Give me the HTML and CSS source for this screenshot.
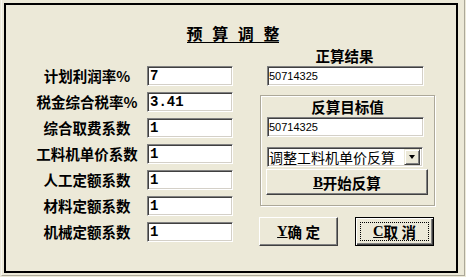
FILE: index.html
```html
<!DOCTYPE html>
<html lang="zh">

<head>
    <meta charset="UTF-8">
    <title>预算调整</title>
    <link rel="stylesheet" href="styles.css">
</head>

<body>
    <div class="win">
        <div class="panel">
            <div class="title"><span>预 算 调 整</span></div>
            <div class="body">
                <!-- 左侧系数 -->
                <div class="fields">
                    <div class="row"><label>计划利润率%</label><input class="coef" value="7"></div>
                    <div class="row"><label>税金综合税率%</label><input class="coef" value="3.41"></div>
                    <div class="row"><label>综合取费系数</label><input class="coef" value="1"></div>
                    <div class="row"><label>工料机单价系数</label><input class="coef" value="1"></div>
                    <div class="row"><label>人工定额系数</label><input class="coef" value="1"></div>
                    <div class="row"><label>材料定额系数</label><input class="coef" value="1"></div>
                    <div class="row"><label>机械定额系数</label><input class="coef" value="1"></div>
                </div>
                <!-- 右侧结果 -->
                <div class="side">
                    <div class="cap">正算结果</div>
                    <input class="num" value="50714325">
                    <div class="group">
                        <div class="cap">反算目标值</div>
                        <input class="num" value="50714325">
                        <div class="combo">
                            <span class="combo-text">调整工料机单价反算</span>
                            <span class="drop"><i></i></span>
                        </div>
                        <button class="btn wide"><u>B</u>开始反算</button>
                    </div>
                    <div class="actions">
                        <button class="btn ok"><u>Y</u>确 定</button>
                        <button class="btn cancel"><span class="focus"><u>C</u>取 消</span></button>
                    </div>
                </div>
            </div>
        </div>
    </div>
</body>

</html>
```

FILE: styles.css
```css
* {
    margin: 0;
    padding: 0;
    box-sizing: border-box;
}

body {
    background: #ECE9D8;
    font-family: "Noto Sans CJK SC", sans-serif;
}

.win {
    width: 464px;
    height: 276px;
    margin-left: 1px;
    border-left: 1px solid #f8f7f0;
    border-right: 1px solid #aca899;
    border-bottom: 1px solid #aca899;
    padding: 3px 0 0 2px;
}

.panel {
    width: 454px;
    height: 270px;
    border: 2px solid #000;
}

.title {
    margin-top: 19px;
    padding-left: 4px;
    text-align: center;
    font-size: 16px;
    font-weight: bold;
    line-height: 18px;
}

.title span {
    display: inline-block;
    border-bottom: 1px solid #000;
    word-spacing: 6px;
}

.body {
    display: flex;
    margin-top: 3px;
    padding-left: 24px;
}

.fields {
    display: flex;
    flex-direction: column;
    gap: 6px;
    padding-top: 20px;
}

.row {
    display: flex;
    height: 20px;
    align-items: center;
}

.row label {
    width: 114px;
    text-align: center;
    font-size: 14.5px;
    font-weight: bold;
    line-height: 20px;
}

input {
    display: block;
    height: 20px;
    background: #fff;
    border: 1px solid;
    border-color: #808080 #fff #fff #808080;
    box-shadow: inset 1px 1px #404040, inset -1px -1px #d4d0c8;
    outline: none;
    padding: 0 2px;
    color: #000;
}

.coef {
    width: 86px;
    margin-left: 3px;
    font-family: "Liberation Mono", monospace;
    font-weight: bold;
    font-size: 14px;
}

.side {
    width: 175px;
    margin-left: 27px;
}

.cap {
    text-align: center;
    font-size: 14.5px;
    font-weight: bold;
    line-height: 20px;
    padding-right: 6px;
}

.num {
    width: 157px;
    margin-left: 7px;
    font-family: "Liberation Sans", sans-serif;
    font-size: 11px;
    padding: 0 1px;
}

.group {
    margin-top: 9px;
    height: 111px;
    border: 1px solid #aca899;
    box-shadow: inset 1px 1px #fff, 1px 1px #fff;
    padding: 1px 0 0 6px;
}

.group .num {
    margin-left: 0;
}

.combo {
    display: flex;
    align-items: center;
    width: 156px;
    height: 20px;
    margin-top: 10px;
    background: #fff;
    border: 1px solid;
    border-color: #808080 #fff #fff #808080;
    box-shadow: inset 1px 1px #404040, inset -1px -1px #d4d0c8;
    padding: 2px 2px 2px 1px;
}

.combo-text {
    flex: 1;
    font-size: 14px;
    line-height: 16px;
    white-space: nowrap;
}

.drop {
    display: flex;
    align-items: center;
    justify-content: center;
    width: 16px;
    height: 16px;
    background: #ECE9D8;
    border: 1px solid;
    border-color: #ECE9D8 #404040 #404040 #ECE9D8;
    box-shadow: inset 1px 1px #fff, inset -1px -1px #808080;
}

.drop i {
    width: 0;
    height: 0;
    border-left: 3.5px solid transparent;
    border-right: 3.5px solid transparent;
    border-top: 4px solid #000;
}

.btn {
    display: flex;
    align-items: center;
    justify-content: center;
    background: #ECE9D8;
    border: 1px solid;
    border-color: #fff #404040 #404040 #fff;
    box-shadow: inset -1px -1px #808080, inset 1px 1px #ECE9D8;
    font-family: "Noto Sans CJK SC", sans-serif;
    font-size: 14.5px;
    font-weight: bold;
    color: #000;
    white-space: pre;
}

.btn u {
    font-family: "Liberation Serif", serif;
}

.wide {
    width: 162px;
    height: 26px;
    margin: 2px 0 0 -1px;
}

.actions {
    display: flex;
    gap: 17px;
    margin-top: 11px;
    margin-left: -1px;
}

.ok,
.cancel {
    width: 79px;
    height: 29px;
}

.cancel {
    border: 1px solid #000;
    box-shadow: inset 1px 1px #fff, inset -1px -1px #404040, inset -2px -2px #808080;
    padding: 4px;
}

.focus {
    display: flex;
    align-items: center;
    justify-content: center;
    width: 100%;
    height: 100%;
    border: 1px dotted #000;
    white-space: pre;
}
```
